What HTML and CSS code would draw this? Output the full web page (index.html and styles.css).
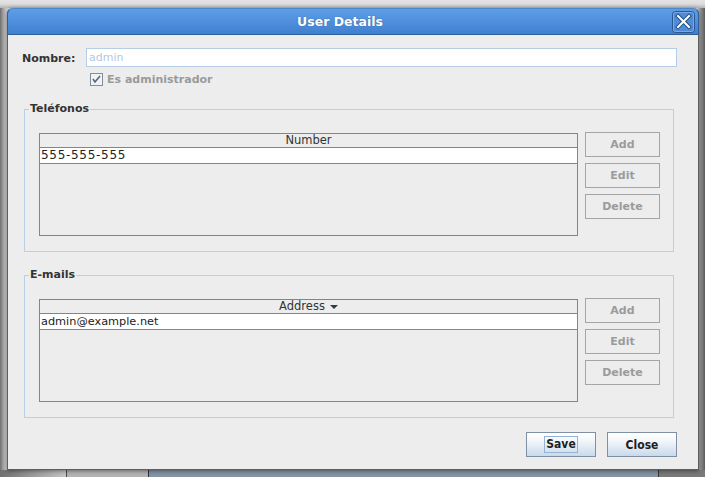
FILE: index.html
```html
<!DOCTYPE html>
<html>
<head>
<meta charset="utf-8">
<link rel="stylesheet" href="styles.css">
</head>
<body>
<div class="desk">
  <div class="window">
    <div class="titlebar">
      <span class="title">User Details</span>
      <span class="close">
        <svg width="23" height="22" viewBox="0 0 23 22">
          <rect x="0.5" y="0.5" width="22" height="21" rx="3" fill="#4f8bd6" stroke="#2a5790"/>
          <rect x="1.5" y="1.5" width="20" height="19" rx="2" fill="none" stroke="#78a9e6"/>
          <path d="M6 5 L17 16 M17 5 L6 16" stroke="#23507f" stroke-width="4" stroke-linecap="square"/>
          <path d="M6 5 L17 16 M17 5 L6 16" stroke="#ffffff" stroke-width="2" stroke-linecap="square"/>
        </svg>
      </span>
    </div>
    <div class="content">
      <div class="name-row">
        <span class="label">Nombre:</span>
        <div class="field">admin</div>
      </div>
      <div class="check-row">
        <svg class="checkbox" width="13" height="13" viewBox="0 0 13 13">
          <rect x="0.5" y="0.5" width="12" height="12" fill="#f2f2f2" stroke="#7f8ea0"/>
          <path d="M3 6 L5 9 L10 3" fill="none" stroke="#56657a" stroke-width="1.6"/>
        </svg>
        <span>Es administrador</span>
      </div>

      <fieldset class="group first">
        <legend>Teléfonos</legend>
        <div class="group-body">
          <div class="table">
            <div class="thead">Number</div>
            <div class="row phone">555-555-555</div>
          </div>
          <div class="btns">
            <button class="btn-dis">Add</button>
            <button class="btn-dis">Edit</button>
            <button class="btn-dis">Delete</button>
          </div>
        </div>
      </fieldset>

      <fieldset class="group second">
        <legend>E-mails</legend>
        <div class="group-body">
          <div class="table">
            <div class="thead">Address <span class="sort"></span></div>
            <div class="row mail">admin@example.net</div>
          </div>
          <div class="btns">
            <button class="btn-dis">Add</button>
            <button class="btn-dis">Edit</button>
            <button class="btn-dis">Delete</button>
          </div>
        </div>
      </fieldset>

      <div class="actions">
        <button class="btn"><span class="focus">Save</span></button>
        <button class="btn">Close</button>
      </div>
    </div>
  </div>
  <div class="dock">
    <div class="dock-a"></div>
    <div class="dock-b"></div>
    <div class="dock-c"></div>
    <div class="dock-d"></div>
  </div>
</div>
</body>
</html>
```

FILE: styles.css
```css
html, body {
  margin: 0;
  padding: 0;
}
body {
  width: 705px;
  height: 477px;
  overflow: hidden;
  font-family: "DejaVu Sans", sans-serif;
  background: #d0d0d0;
}
.desk {
  display: flex;
  flex-direction: column;
  height: 477px;
  background: linear-gradient(to right, #6e6e6e 0px, #bdbdbd 5px, #d6d6d6 8px, #d6d6d6 697px, #9a9a9a 700px, #5a5a5a 705px);
}
.desk::before {
  content: "";
  display: block;
  height: 8px;
  flex: none;
  background: linear-gradient(to bottom, #e4e4e4 0px, #dcdcdc 4px, #b4b4b4 8px);
}
.window {
  flex: none;
  margin-left: 7px;
  width: 692px;
  height: 462px;
  box-sizing: border-box;
  border: 1px solid #5e5e5e;
  border-top: none;
  border-radius: 6px 6px 0 0;
  background: #ededed;
  display: flex;
  flex-direction: column;
  box-shadow: 0 1px 4px rgba(0,0,0,0.45);
  position: relative;
}
.titlebar {
  flex: none;
  height: 27px;
  box-sizing: border-box;
  margin: 0 -1px;
  border-radius: 6px 6px 0 0;
  border: 1px solid #2f5f99;
  border-top-color: #4d87cc;
  background: linear-gradient(to bottom, #5d9ee5 0%, #4f8fdc 50%, #3f7fcf 100%);
  display: flex;
  align-items: center;
  position: relative;
}
.title {
  width: 664px;
  text-align: center;
  color: #ffffff;
  font-weight: bold;
  font-size: 12.5px;
  line-height: 16px;
  padding-top: 1px;
  text-shadow: 0 0 1px rgba(20,50,100,0.6);
}
.close {
  display: flex;
}
.content {
  flex: 1;
  padding: 0 21px 0 14px;
  display: flex;
  flex-direction: column;
}
.name-row {
  display: flex;
  align-items: center;
  margin-top: 13px;
  height: 19px;
}
.label {
  width: 64px;
  font-weight: bold;
  font-size: 11px;
  color: #333333;
  padding-top: 1px;
}
.field {
  flex: 1;
  height: 19px;
  box-sizing: border-box;
  border: 1px solid #b5cde6;
  background: #ffffff;
  color: #b3c8df;
  font-size: 11px;
  line-height: 17px;
  padding-left: 2px;
}
.check-row {
  display: flex;
  align-items: center;
  margin-top: 6px;
  margin-left: 68px;
  height: 13px;
  font-weight: bold;
  font-size: 11px;
  color: #9a9a9a;
}
.checkbox {
  margin-right: 4px;
  flex: none;
}
.group {
  margin: 16px 3px 0 2px;
  padding: 16px 13px 15px 14px;
  border: 1px solid #b8cfe5;
  min-width: 0;
}
.group legend {
  font-weight: bold;
  font-size: 11px;
  line-height: 14px;
  color: #333333;
  padding: 0 1px;
  margin-left: -10px;
}
.group-body {
  display: flex;
  align-items: flex-start;
  gap: 7px;
}
.table {
  width: 539px;
  height: 103px;
  box-sizing: border-box;
  border: 1px solid #7a8794;
  margin-top: 1px;
  background: #ededed;
}
.thead {
  height: 14px;
  box-sizing: border-box;
  border-bottom: 1px solid #7a8794;
  font-size: 11.5px;
  line-height: 13px;
  color: #333333;
  display: flex;
  justify-content: center;
  align-items: center;
  gap: 5px;
}
.sort {
  width: 0;
  height: 0;
  border-left: 4px solid transparent;
  border-right: 4px solid transparent;
  border-top: 4px solid #2b3c4e;
  margin-top: 1px;
}
.row {
  height: 16px;
  box-sizing: border-box;
  border-bottom: 1px solid #7a8794;
  background: #ffffff;
  font-size: 12px;
  line-height: 15px;
  padding-left: 1px;
  color: #222222;
}
.row.phone {
  letter-spacing: 0.7px;
}
.row.mail {
  font-size: 11.3px;
}
.btns {
  display: flex;
  flex-direction: column;
  gap: 6px;
}
.btn-dis {
  width: 75px;
  height: 25px;
  box-sizing: border-box;
  border: 1px solid #a5a5a5;
  background: #ededed;
  color: #9b9b9b;
  font-family: "DejaVu Sans", sans-serif;
  font-weight: bold;
  font-size: 11px;
  padding: 0;
  margin: 0;
  border-radius: 0;
}
.actions {
  display: flex;
  justify-content: flex-end;
  gap: 11px;
  margin-top: 14px;
}
.btn {
  width: 70px;
  height: 25px;
  box-sizing: border-box;
  border: 1px solid #7f90a3;
  background: linear-gradient(to bottom, #ffffff 0%, #f2f6fa 35%, #c9d9ea 100%);
  color: #1e1e1e;
  font-family: "DejaVu Sans Condensed", "DejaVu Sans", sans-serif;
  font-weight: bold;
  font-size: 12px;
  padding: 0;
  margin: 0;
  border-radius: 0;
  display: flex;
  align-items: center;
  justify-content: center;
}
.focus {
  border: 1px solid #97b3d3;
  padding: 1px 1px;
  line-height: 13px;
}
.dock {
  flex: 1;
  display: flex;
  background: #a0a0a0;
}
.dock-a {
  width: 66px;
  background: linear-gradient(to right, #707070, #c4c4c4);
}
.dock-b {
  width: 81px;
  border-left: 1px solid #4a4a4a;
  background: #b4b4b4;
}
.dock-c {
  width: 509px;
  border-left: 1px solid #2a3140;
  background: #8593a3;
}
.dock-d {
  flex: 1;
  border-left: 1px solid #3a3a3a;
  background: #7a7a7a;
}
```
